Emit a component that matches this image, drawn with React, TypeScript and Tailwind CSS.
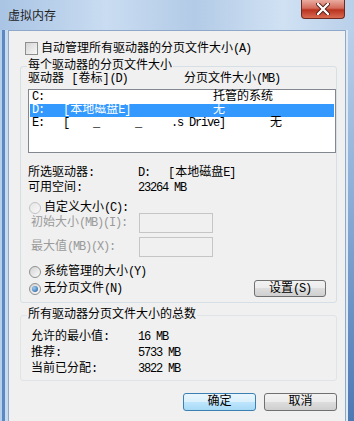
const Check = () => (
  <span className="w-[13px] h-[13px] shrink-0 border border-[#8e8f8f] bg-[linear-gradient(135deg,#d4d4d4,#f8f8f8)]" />
);

const Radio = ({ checked, disabled }: { checked?: boolean; disabled?: boolean }) => (
  <span
    className={`w-[12px] h-[12px] shrink-0 rounded-full border flex items-center justify-center ${
      disabled
        ? "border-[#c2c2c2] bg-[linear-gradient(135deg,#e6e6e6,#f8f8f8)]"
        : "border-[#8e8f8f] bg-[linear-gradient(135deg,#d2d2d2,#fbfbfb)]"
    }`}
  >
    {checked && (
      <span className="w-[6px] h-[6px] rounded-full bg-[radial-gradient(circle_at_35%_35%,#9ccbf2,#1b5a9c)]" />
    )}
  </span>
);

const Btn = ({ label, focus }: { label: string; focus?: boolean }) => (
  <div
    className={`w-[73px] h-[18px] rounded-[3px] border flex items-center justify-center leading-[14px] ${
      focus
        ? "border-[#3c7fb1] bg-[linear-gradient(#eaf6fd,#d9f0fc_50%,#bee6fd_50%,#a7d9f5)]"
        : "border-[#707070] bg-[linear-gradient(#f2f2f2,#ebebeb_50%,#dddddd_50%,#cfcfcf)]"
    }`}
  >
    {label}
  </div>
);

// latin bits are narrower in the original (half-width)
const L = ({ children }: { children: string }) => (
  <span className="tracking-[-1.2px] whitespace-pre">{children}</span>
);

const App = () => {
  return (
    <div className="w-[354px] h-[421px] overflow-hidden flex flex-col bg-[#a9c6e6] text-[12px] text-black font-['Liberation_Mono','Noto_Sans_CJK_SC',monospace]">
      {/* title bar */}
      <div className="h-[30px] shrink-0 flex items-start justify-between bg-[linear-gradient(90deg,#a9c4e4_0%,#c9dcf1_30%,#b3cbe7_55%,#d0e1f3_80%,#b9d0ea_100%)]">
        <span className="ml-[8px] mt-[7px] leading-[16px] font-['Noto_Sans_CJK_SC',sans-serif] text-[#1e1e1e]">
          虚拟内存
        </span>
        <div className="mr-[9px] w-[44px] h-[19px] rounded-b-[4px] border border-t-0 border-[#6d2a1e] flex items-center justify-center bg-[linear-gradient(#e9aca0,#d46c5c_45%,#b9331f_55%,#d96a52)]">
          <svg width="14" height="12" viewBox="0 0 14 12">
            <path d="M2 1 L12 11 M12 1 L2 11" stroke="#4a1a12" strokeWidth="4" strokeLinecap="round" />
            <path d="M2 1 L12 11 M12 1 L2 11" stroke="#ffffff" strokeWidth="2.4" strokeLinecap="round" />
          </svg>
        </div>
      </div>

      <div className="flex flex-1">
        {/* left frame */}
        <div className="w-[8px] flex">
          <div className="w-[2px] bg-[#b4d0ec]" />
          <div className="w-[3px] bg-[#5d89c2]" />
          <div className="w-[3px] bg-[#c9dbee]" />
        </div>

        {/* content */}
        <div className="w-[338px] bg-[#f0f0f0] border border-[#8da8c8] border-b-0 flex flex-col pl-[11px] pt-[11px]">
          <div className="h-[13px] flex items-center gap-[3px] ml-[5px]">
            <Check />
            <span className="leading-[14px]">自动管理所有驱动器的分页文件大小<L>(A)</L></span>
          </div>

          {/* group 1 */}
          <div className="mt-[11px] w-[317px] border border-[#d5dfe5] rounded-[3px] flex flex-col pl-[7px] pb-[5px]">
            <span className="-mt-[8px] ml-[-1px] px-[1px] h-[14px] leading-[14px] w-fit bg-[#f0f0f0]">
              每个驱动器的分页文件大小
            </span>
            <div className="-mt-[1px] h-[14px] flex leading-[14px]">
              <span className="w-[156px]">驱动器 [卷标]<L>(D)</L></span>
              <span>分页文件大小<L>(MB)</L></span>
            </div>
            <div className="mt-[3px] w-[308px] h-[64px] border border-[#828790] bg-white px-[1px] pt-[1px] flex flex-col">
              <div className="h-[13px] flex items-center pl-[2px] leading-[13px]">
                <span className="w-[31px]"><L>C:</L></span>
                <span className="w-[150px]" />
                <span>托管的系统</span>
              </div>
              <div className="h-[13px] flex items-center pl-[2px] leading-[13px] bg-[#3399ff] text-white">
                <span className="w-[31px]"><L>D:</L></span>
                <span className="w-[150px]">[本地磁盘<L>E</L>]</span>
                <span>无</span>
              </div>
              <div className="h-[13px] flex items-center pl-[2px] leading-[13px]">
                <span className="w-[31px]"><L>E:</L></span>
                <span className="w-[207px] overflow-hidden"><L>{"[‾   _   ‾  _ ‾‾  .s Drive]"}</L></span>
                <span>无</span>
              </div>
            </div>

            <div className="mt-[13px] h-[15px] flex items-center leading-[15px]">
              <span className="w-[110px]">所选驱动器:</span>
              <span><L>{"D:   "}</L>[本地磁盘<L>E</L>]</span>
            </div>
            <div className="h-[15px] flex items-center leading-[15px]">
              <span className="w-[110px]">可用空间:</span>
              <L>23264 MB</L>
            </div>

            <div className="mt-[7px] h-[10px] flex items-center gap-[3px] ml-[1px]">
              <Radio disabled />
              <span className="leading-[14px]">自定义大小<L>(C):</L></span>
            </div>
            <div className="h-[20px] flex items-center">
              <span className="w-[111px] pl-[3px] text-[#9a9a9a] leading-[14px]">初始大小<L>(MB)(I):</L></span>
              <span className="w-[74px] h-[20px] border border-[#c5c5c5] bg-[#f0f0f0]" />
            </div>
            <div className="mt-[4px] h-[20px] flex items-center">
              <span className="w-[111px] pl-[3px] text-[#9a9a9a] leading-[14px]">最大值<L>(MB)(X):</L></span>
              <span className="w-[74px] h-[20px] border border-[#c5c5c5] bg-[#f0f0f0]" />
            </div>

            <div className="mt-[8px] h-[14px] flex items-center gap-[3px] ml-[1px]">
              <Radio />
              <span className="leading-[14px]">系统管理的大小<L>(Y)</L></span>
            </div>
            <div className="mt-[1px] h-[17px] flex items-center justify-between">
              <div className="flex items-center gap-[3px] ml-[1px]">
                <Radio checked />
                <span className="leading-[14px]">无分页文件<L>(N)</L></span>
              </div>
              <div className="mr-[10px] w-[72px] h-[17px] rounded-[3px] border border-[#707070] flex items-center justify-center leading-[14px] bg-[linear-gradient(#f2f2f2,#ebebeb_50%,#dddddd_50%,#cfcfcf)]">
                设置<L>(S)</L>
              </div>
            </div>
          </div>

          {/* group 2 */}
          <div className="mt-[12px] w-[317px] border border-[#dfe4e8] rounded-[3px] flex flex-col pl-[7px] pb-[3px]">
            <span className="-mt-[8px] ml-[-1px] px-[1px] h-[14px] leading-[14px] w-fit bg-[#f0f0f0]">
              所有驱动器分页文件大小的总数
            </span>
            <div className="mt-[7px] h-[16px] flex items-center leading-[14px] pl-[3px]">
              <span className="w-[107px]">允许的最小值:</span>
              <L>16 MB</L>
            </div>
            <div className="h-[16px] flex items-center leading-[14px] pl-[3px]">
              <span className="w-[107px]">推荐:</span>
              <L>5733 MB</L>
            </div>
            <div className="h-[16px] flex items-center leading-[14px] pl-[3px]">
              <span className="w-[107px]">当前已分配:</span>
              <L>3822 MB</L>
            </div>
          </div>

          <div className="mt-[12px] w-[317px] flex justify-end gap-[8px]">
            <Btn label="确定" focus />
            <Btn label="取消" />
          </div>
        </div>

        {/* right frame */}
        <div className="w-[8px] flex">
          <div className="w-[2px] bg-[#dfe9f3]" />
          <div className="w-[6px] bg-[linear-gradient(#b9d0ea,#8fb0d8_40%,#4c78b4)]" />
        </div>
      </div>
    </div>
  );
};

export default App;
